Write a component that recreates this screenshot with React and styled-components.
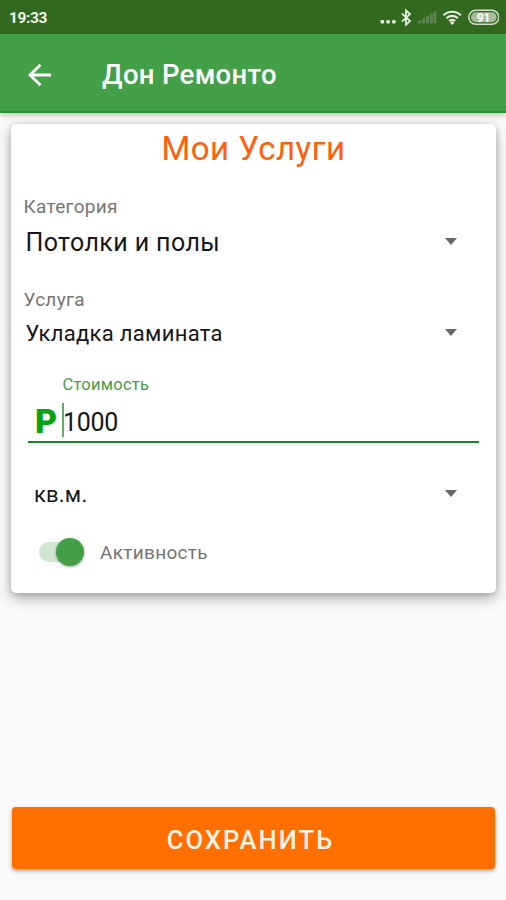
import React from 'react';
import styled, { createGlobalStyle } from 'styled-components';

const green = '#43a047';
const greenDark = '#33691e';
const orange = '#ff6f00';
const grayText = '#757575';

const GlobalStyle = createGlobalStyle`
  * {
    box-sizing: border-box;
  }

  body {
    margin: 0;
    background: #fafafa;
    font-family: Roboto, sans-serif;
  }
`;

const Screen = styled.div`
  display: flex;
  flex-direction: column;
  width: 506px;
  height: 900px;
  overflow: hidden;
  background: #fafafa;
`;

const StatusBar = styled.div`
  display: flex;
  align-items: center;
  flex-shrink: 0;
  height: 34px;
  padding: 0 7px 0 9px;
  background: ${greenDark};
`;

const Clock = styled.span`
  flex-grow: 1;
  padding-top: 2px;
  color: #f0f5ec;
  font-size: 15.5px;
  font-weight: 700;
  line-height: 32px;
  letter-spacing: -0.4px;
`;

const AppBar = styled.header`
  display: flex;
  align-items: center;
  flex-shrink: 0;
  height: 79px;
  padding: 4px 0 0 22px;
  background: ${green};
  border-bottom: 2px solid #289030;
  box-shadow: 0 2px 6px rgba(0, 0, 0, 0.25);
`;

const BackButton = styled.button`
  display: flex;
  width: 36px;
  height: 36px;
  margin-right: 44px;
  padding: 0;
  border: 0;
  background: none;
`;

const AppTitle = styled.h1`
  margin: 1px 0 0;
  color: #fff;
  font-size: 27.5px;
  font-weight: 500;
  line-height: 36px;
  letter-spacing: 0.3px;
`;

const Card = styled.main`
  display: flex;
  flex-direction: column;
  flex-shrink: 0;
  width: 485px;
  height: 469px;
  margin: 11px 0 0 11px;
  background: #fff;
  border-radius: 5px;
  box-shadow: 0 6px 14px rgba(0, 0, 0, 0.28), 0 1px 6px rgba(0, 0, 0, 0.18);
`;

const CardTitle = styled.h2`
  margin: 4px 0 0;
  color: #ff5f0a;
  font-size: 33px;
  font-weight: 400;
  line-height: 42px;
  letter-spacing: 0.45px;
  text-align: center;
`;

const FieldLabel = styled.label`
  margin: ${({ $top }) => $top}px 0 0 12.5px;
  color: ${grayText};
  font-size: 19px;
  line-height: 24px;
  letter-spacing: 0.3px;
`;

const Select = styled.div`
  display: flex;
  align-items: center;
  justify-content: space-between;
  height: 36px;
  margin-top: ${({ $top }) => $top}px;
  padding: 0 39px 0 ${({ $left }) => $left}px;
`;

const SelectValue = styled.span`
  padding-top: 2px;
  color: #161616;
  font-size: ${({ $size }) => $size}px;
  line-height: 36px;
  letter-spacing: ${({ $spacing }) => $spacing}px;
`;

const Caret = styled.span`
  margin-bottom: 1px;
  border: 6.5px solid transparent;
  border-top: 7px solid #666;
  border-bottom: 0;
`;

const PriceField = styled.div`
  display: flex;
  flex-direction: column;
  height: 71px;
  margin: 21px 17px 1px;
  border-bottom: 2px solid #168c1b;
`;

const PriceLabel = styled.label`
  margin: 2px 0 0 34.5px;
  color: ${green};
  font-size: 16.5px;
  line-height: 22px;
  letter-spacing: 0.25px;
`;

const PriceRow = styled.div`
  display: flex;
  align-items: center;
  height: 38px;
  margin-top: 5px;
  padding-left: 7px;
`;

const Currency = styled.span`
  width: 27px;
  padding-top: 2px;
  color: #09a30e;
  font-size: 34px;
  font-weight: 900;
  line-height: 38px;
`;

const Cursor = styled.span`
  width: 2px;
  height: 34px;
  background: #62ad65;
`;

const PriceValue = styled.span`
  margin-left: -1px;
  padding-top: 6px;
  color: #161616;
  font-size: 25px;
  line-height: 38px;
  letter-spacing: -0.3px;
`;

const SwitchRow = styled.div`
  display: flex;
  align-items: center;
  height: 32px;
  margin: 24px 0 0 28px;
`;

const Track = styled.span`
  display: flex;
  align-items: center;
  justify-content: flex-end;
  width: 44.5px;
  height: 20px;
  margin-right: 16.5px;
  border-radius: 10px;
  background: #cfe7d0;
`;

const Thumb = styled.span`
  width: 28px;
  height: 28px;
  border-radius: 50%;
  background: ${green};
  box-shadow: 0 1px 3px rgba(0, 0, 0, 0.35);
`;

const SwitchLabel = styled.span`
  padding-top: 2px;
  color: ${grayText};
  font-size: 19px;
  line-height: 32px;
  letter-spacing: 0.3px;
`;

const SaveButton = styled.button`
  height: 62px;
  margin: auto 11px 31px 12px;
  padding: 3px 6px 0 0;
  border: 0;
  border-radius: 4px;
  background: ${orange};
  box-shadow: 0 2px 4px rgba(0, 0, 0, 0.35);
  color: #fff3e8;
  font-family: inherit;
  font-size: 25.5px;
  font-weight: 500;
  letter-spacing: 2.1px;
`;

const StatusIcons = () => (
  <svg width="120" height="24" viewBox="379 5 120 24" fill="none">
    <g fill="#e6eee0">
      <rect x="380.5" y="20" width="3.6" height="3.6" rx="1" />
      <rect x="386.3" y="20" width="3.6" height="3.6" rx="1" />
      <rect x="392.1" y="20" width="3.6" height="3.6" rx="1" />
    </g>
    <path
      d="M402 13.7l8 7.4-4 3.7V10.6l4 3.5-8 7.6"
      stroke="#e6eee0"
      strokeWidth="1.8"
    />
    <path
      d="M418 23.2v-1.8l3-1.6v3.4zM422 23.2v-4l3-1.7v5.7zM426 23.2v-6.3l3-1.8v8.1zM430 23.2v-8.7l2.8-1.8v10.5zM433.6 23.2v-11l2.8-1.9v12.9z"
      fill="#5d8650"
    />
    <g stroke="#e6eee0" strokeWidth="2.1">
      <path d="M443.5 15.3a12.3 12.3 0 0 1 17.4 0" />
      <path d="M446.4 18.3a8.2 8.2 0 0 1 11.6 0" />
      <path d="M449.2 21.1a4.2 4.2 0 0 1 6 0" />
    </g>
    <path d="M452.2 25l-2.2-2.3a3.1 3.1 0 0 1 4.4 0z" fill="#e6eee0" />
    <rect x="471" y="12.3" width="25.6" height="10" rx="5" fill="#a9bda0" />
    <rect
      x="468.8"
      y="10.3"
      width="30"
      height="14"
      rx="7"
      stroke="#d2dfca"
      strokeWidth="1.5"
    />
    <text
      x="483.6"
      y="21.6"
      fill="#fff"
      fontSize="12"
      fontWeight="700"
      textAnchor="middle"
    >
      91
    </text>
  </svg>
);

const BackIcon = () => (
  <svg width="36" height="36" viewBox="0 0 36 36" fill="none">
    <path
      d="M29 18H8.5M18.5 7.8L8 18l10.5 10.2"
      stroke="#fff"
      strokeWidth="2.8"
    />
  </svg>
);

const App = () => (
  <>
    <GlobalStyle />
    <Screen>
      <StatusBar>
        <Clock>19:33</Clock>
        <StatusIcons />
      </StatusBar>
      <AppBar>
        <BackButton aria-label="Назад">
          <BackIcon />
        </BackButton>
        <AppTitle>Дон Ремонто</AppTitle>
      </AppBar>
      <Card>
        <CardTitle>Мои Услуги</CardTitle>
        <FieldLabel $top={25}>Категория</FieldLabel>
        <Select $top={5} $left={14.5}>
          <SelectValue $size={25} $spacing={0.4}>
            Потолки и полы
          </SelectValue>
          <Caret />
        </Select>
        <FieldLabel $top={28}>Услуга</FieldLabel>
        <Select $top={3} $left={14.5}>
          <SelectValue $size={22} $spacing={0.3}>
            Укладка ламината
          </SelectValue>
          <Caret />
        </Select>
        <PriceField>
          <PriceLabel>Стоимость</PriceLabel>
          <PriceRow>
            <Currency>Р</Currency>
            <Cursor />
            <PriceValue>1000</PriceValue>
          </PriceRow>
        </PriceField>
        <Select $top={32} $left={23}>
          <SelectValue $size={22} $spacing={0.2}>
            кв.м.
          </SelectValue>
          <Caret />
        </Select>
        <SwitchRow>
          <Track>
            <Thumb />
          </Track>
          <SwitchLabel>Активность</SwitchLabel>
        </SwitchRow>
      </Card>
      <SaveButton>СОХРАНИТЬ</SaveButton>
    </Screen>
  </>
);

export default App;
